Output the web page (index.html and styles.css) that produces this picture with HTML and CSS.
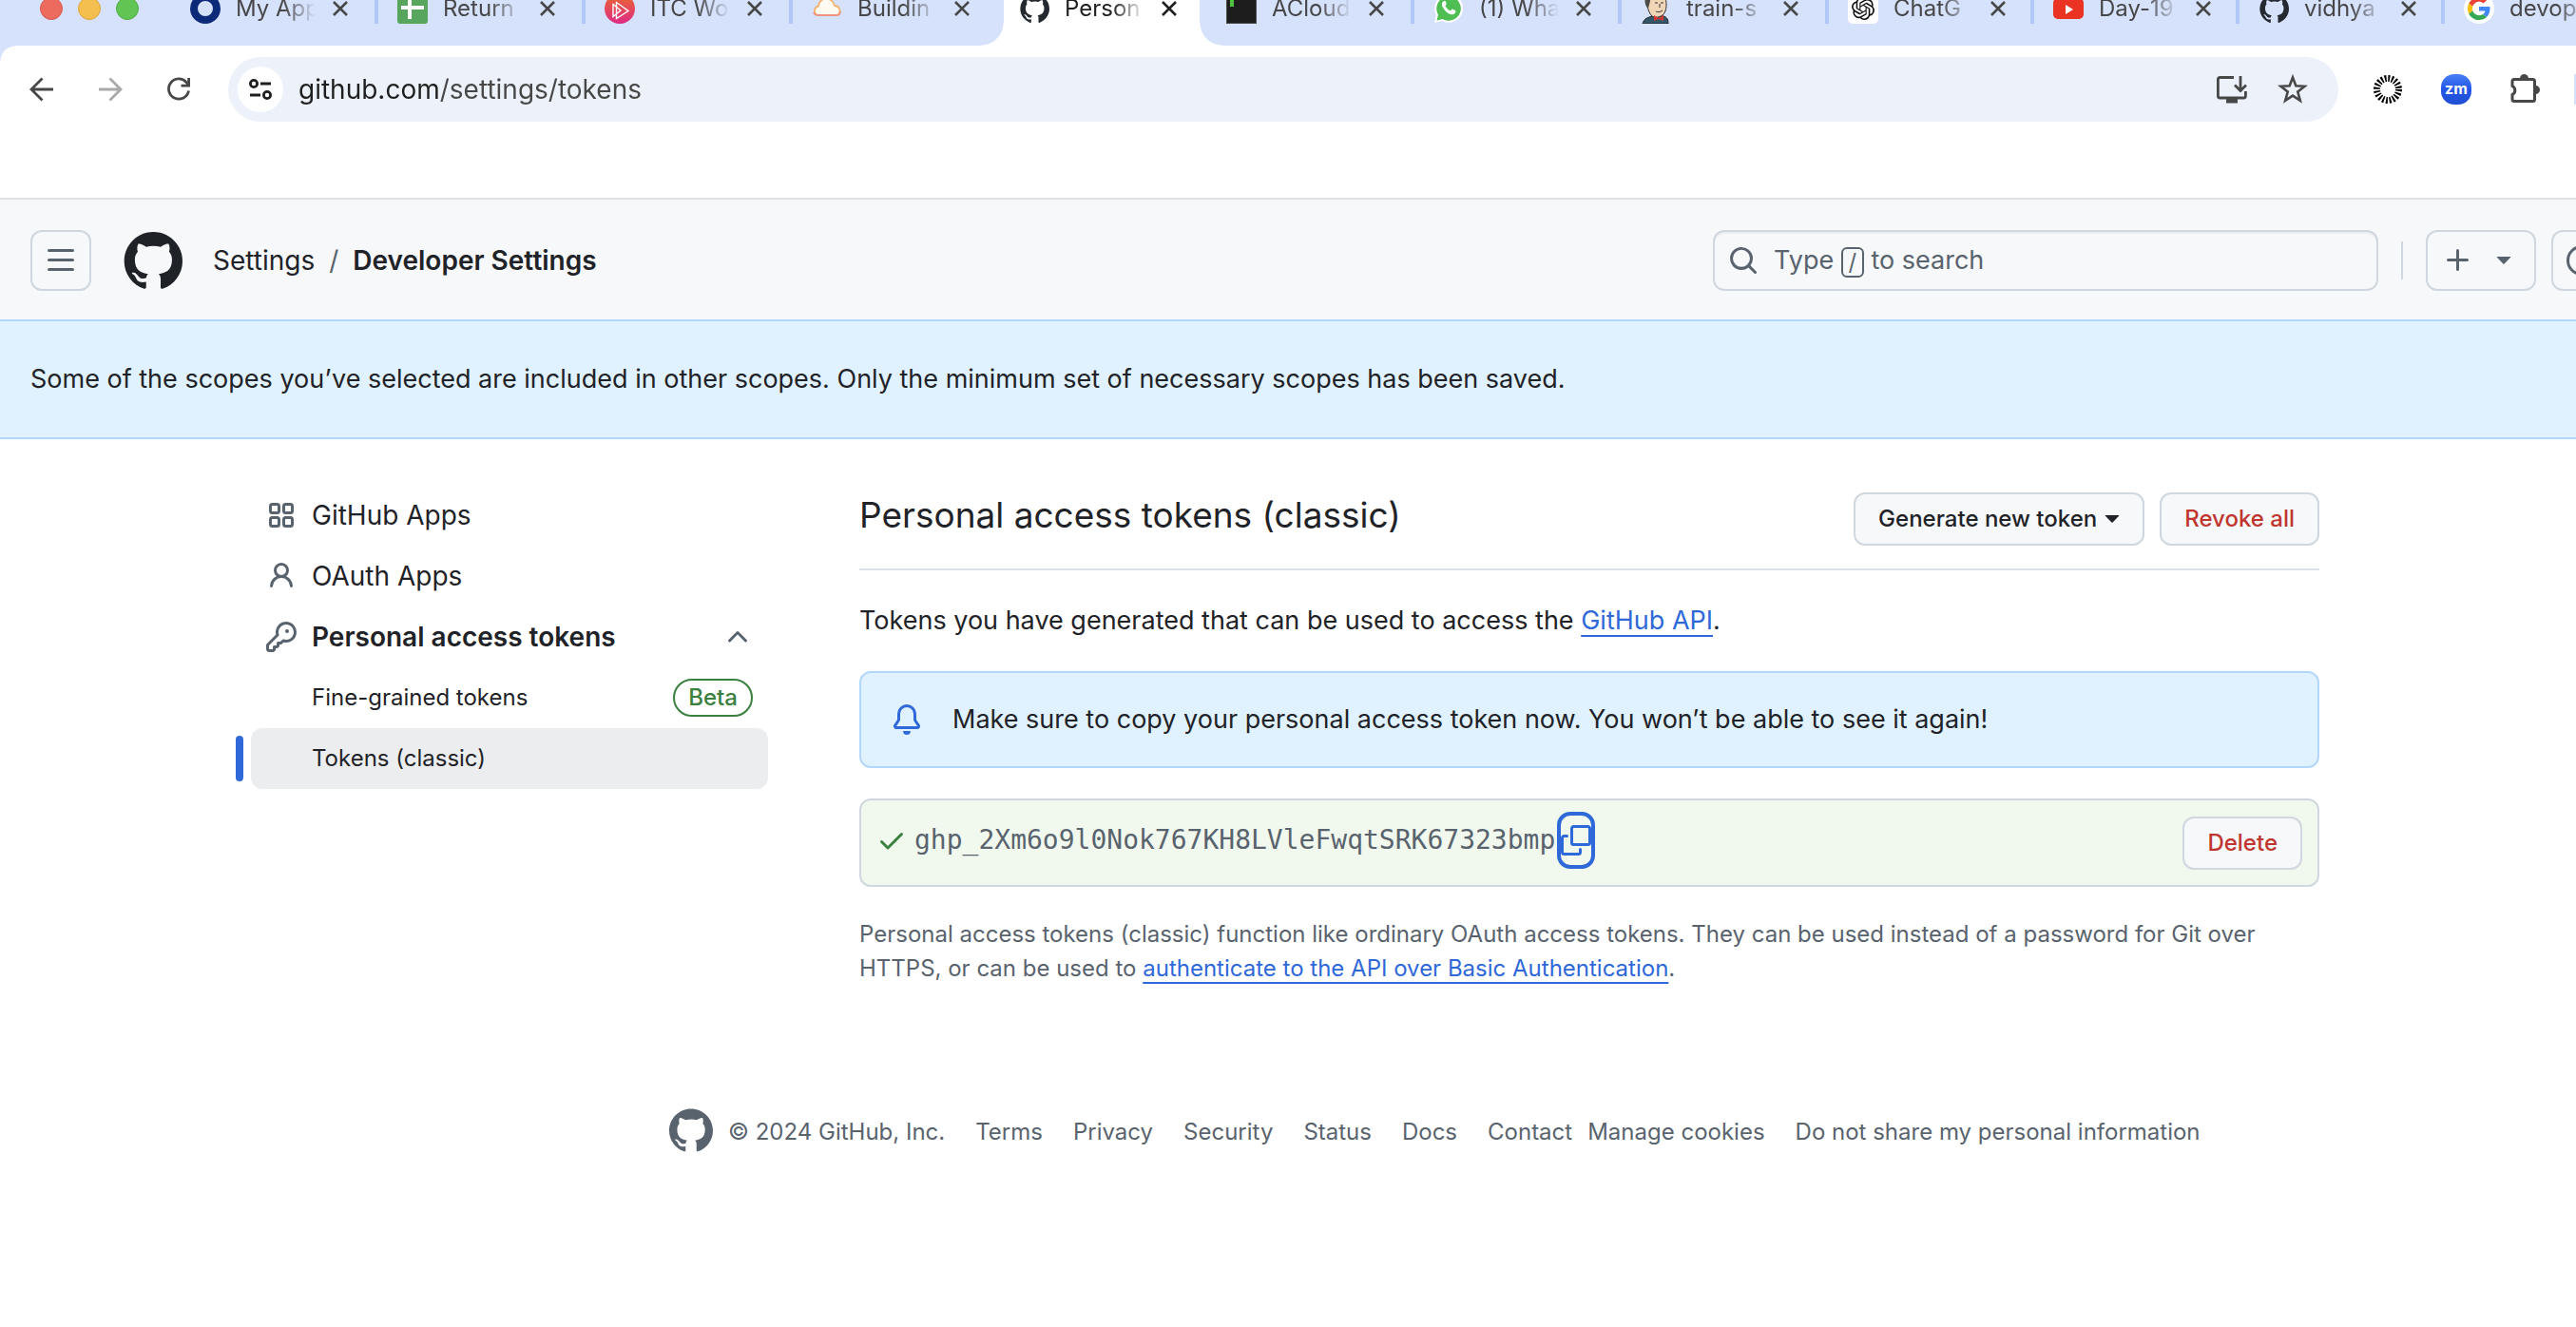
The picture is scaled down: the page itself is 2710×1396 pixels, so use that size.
FILE: index.html
```html
<!DOCTYPE html>
<html lang="en">
<head>
<meta charset="utf-8">
<title>Personal Access Tokens (Classic)</title>
<link rel="stylesheet" href="styles.css">
</head>
<body>
<svg class="sprite" aria-hidden="true">
  <symbol id="mark" viewBox="0 0 24 24"><path d="M12.5.75C6.146.75 1 5.896 1 12.25c0 5.089 3.292 9.387 7.863 10.91.575.101.79-.244.79-.546 0-.273-.014-1.178-.014-2.142-2.889.532-3.636-.704-3.866-1.35-.13-.331-.69-1.352-1.18-1.625-.402-.216-.977-.748-.014-.762.906-.014 1.553.834 1.769 1.179 1.035 1.74 2.688 1.25 3.349.948.1-.747.402-1.25.733-1.538-2.559-.287-5.232-1.279-5.232-5.678 0-1.25.445-2.285 1.178-3.09-.115-.288-.517-1.467.115-3.048 0 0 .963-.302 3.163 1.179.92-.259 1.897-.388 2.875-.388.977 0 1.955.13 2.875.388 2.2-1.495 3.162-1.179 3.162-1.179.633 1.581.23 2.76.115 3.048.733.805 1.179 1.825 1.179 3.09 0 4.413-2.688 5.39-5.247 5.678.417.36.776 1.05.776 2.128 0 1.538-.014 2.774-.014 3.162 0 .302.216.662.79.547C20.709 21.637 24 17.324 24 12.25 24 5.896 18.854.75 12.5.75Z"/></symbol>
  <symbol id="close" viewBox="0 0 16 16"><path d="M1 1l14 14M15 1L1 15" fill="none" stroke="currentColor" stroke-width="2.6"/></symbol>
  <symbol id="triangle" viewBox="4 6 8 6"><path d="m4.427 7.427 3.396 3.396a.25.25 0 0 0 .354 0l3.396-3.396A.25.25 0 0 0 11.396 7H4.604a.25.25 0 0 0-.177.427Z"/></symbol>
</svg>

<div class="tabstrip">
  <div class="lights"><i class="light red"></i><i class="light yellow"></i><i class="light green"></i></div>
  <ul class="tabs">
    <li class="tab"><button class="tab-label"><svg class="favicon" viewBox="0 0 32 32"><circle cx="16" cy="16" r="12" fill="none" stroke="#0d2a78" stroke-width="8"/></svg><span class="tab-title">My App</span></button><button class="tab-close" aria-label="Close"><svg><use href="#close"/></svg></button></li>
    <li class="tab"><button class="tab-label"><svg class="favicon" viewBox="0 0 32 32"><rect width="32" height="32" rx="3" fill="#58a55d"/><path d="M4 15h24M13 6v21" stroke="#fff" stroke-width="4"/></svg><span class="tab-title">Return</span></button><button class="tab-close" aria-label="Close"><svg><use href="#close"/></svg></button></li>
    <li class="tab"><button class="tab-label"><svg class="favicon" viewBox="0 0 32 32"><defs><linearGradient id="ps" x1="0" y1="0" x2="0" y2="1"><stop offset="0" stop-color="#ea6a2c"/><stop offset="1" stop-color="#de2a86"/></linearGradient></defs><circle cx="16" cy="16" r="16" fill="url(#ps)"/><path d="M9 11.5v13l8-6.500-8-6.500ZM12.500 9.500v17l12.500-8Z" fill="none" stroke="#fff" stroke-width="1.4"/></svg><span class="tab-title">ITC Wo</span></button><button class="tab-close" aria-label="Close"><svg><use href="#close"/></svg></button></li>
    <li class="tab tab-before"><button class="tab-label"><svg class="favicon" viewBox="0 0 32 32"><path d="M6 23a5 5 0 0 1 1-9.500C8 7 13 4 18 6c4 1 5 4 6 7 5 0 8 7 3 10Z" fill="#fffaf2" stroke="#f6b26b" stroke-width="1.8"/><path d="M2 20c1 3 3 3 5 3h19c2 0 4-1 4-4" fill="none" stroke="#f0937f" stroke-width="1.8"/></svg><span class="tab-title">Buildin</span></button><button class="tab-close" aria-label="Close"><svg><use href="#close"/></svg></button></li>
    <li class="tab tab-active"><button class="tab-label"><svg class="favicon"><use href="#mark"/></svg><span class="tab-title">Person</span></button><button class="tab-close" aria-label="Close"><svg><use href="#close"/></svg></button></li>
    <li class="tab"><button class="tab-label"><svg class="favicon" viewBox="0 0 32 32"><rect width="32" height="32" fill="#4a4a4a"/><rect x="1" y="1" width="30" height="30" fill="#1d1d1d"/><rect x="4" y="6" width="4" height="8" fill="#4fc23f"/></svg><span class="tab-title">ACloud</span></button><button class="tab-close" aria-label="Close"><svg><use href="#close"/></svg></button></li>
    <li class="tab"><button class="tab-label"><svg class="favicon" viewBox="0 0 32 32"><path d="M1 31l2-8A15 15 0 1 1 9 29Z" fill="#fff"/><path d="M3.5 28.5l1.5-6A12.8 12.8 0 1 1 9.5 27Z" fill="#4fbf54"/><path d="M11 8c-2 1-3 4-1 7 3 5 7 8 11 7 2-.5 3-3 2-4l-3-1.5c-1-.3-1.5 2-2.5 1.8-2-.8-4-2.8-5-5 0-.8 1.500-1.500 1.200-2.500L12.500 8Z" fill="#fff"/></svg><span class="tab-title">(1) Wha</span></button><button class="tab-close" aria-label="Close"><svg><use href="#close"/></svg></button></li>
    <li class="tab"><button class="tab-label"><svg class="favicon" viewBox="0 0 32 32"><path d="M2 32c1-4 3-6 10-8h12c4 1 5 4 5 8Z" fill="#33566b" stroke="#222"/><path d="M7 2h18c3 7 3 17-2 21-5 3-9 3-12 0-3-4-6-13-4-21Z" fill="#f0d6b7" stroke="#333"/><path d="M5 0h15c-7 3-10 4-10 8L8 16c-4-3-4-9-3-16Z" fill="#4a4a48"/><path d="M14 23l5 3 5-3v6l-5-2-5 2Z" fill="#d33833"/><path d="M15 10h3m3 0h3m-4 1v4m-4 4c2 1 4 1 7-1" stroke="#333" fill="none"/></svg><span class="tab-title">train-s</span></button><button class="tab-close" aria-label="Close"><svg><use href="#close"/></svg></button></li>
    <li class="tab tab-narrow"><button class="tab-label"><svg class="favicon" viewBox="-4 -4 32 32"><rect x="-4" y="-4" width="32" height="32" rx="5" fill="#fff"/><path fill="#111" d="M22.2819 9.8211a5.9847 5.9847 0 0 0-.5157-4.9108 6.0462 6.0462 0 0 0-6.5098-2.9A6.0651 6.0651 0 0 0 4.9807 4.1818a5.9847 5.9847 0 0 0-3.9977 2.9 6.0462 6.0462 0 0 0 .7427 7.0966 5.98 5.98 0 0 0 .511 4.9107 6.051 6.051 0 0 0 6.5146 2.9001A5.9847 5.9847 0 0 0 13.2599 24a6.0557 6.0557 0 0 0 5.7718-4.2058 5.9894 5.9894 0 0 0 3.9977-2.9001 6.0557 6.0557 0 0 0-.7475-7.0729zm-9.022 12.6081a4.4755 4.4755 0 0 1-2.8764-1.0408l.1419-.0804 4.7783-2.7582a.7948.7948 0 0 0 .3927-.6813v-6.7369l2.02 1.1686a.071.071 0 0 1 .038.052v5.5826a4.504 4.504 0 0 1-4.4945 4.4944zm-9.6607-4.1254a4.4708 4.4708 0 0 1-.5346-3.0137l.142.0852 4.783 2.7582a.7712.7712 0 0 0 .7806 0l5.8428-3.3685v2.3324a.0804.0804 0 0 1-.0332.0615L9.74 19.9502a4.4992 4.4992 0 0 1-6.1408-1.6464zM2.3408 7.8956a4.485 4.485 0 0 1 2.3655-1.9728V11.6a.7664.7664 0 0 0 .3879.6765l5.8144 3.3543-2.0201 1.1685a.0757.0757 0 0 1-.071 0l-4.8303-2.7865A4.504 4.504 0 0 1 2.3408 7.872zm16.5963 3.8558L13.1038 8.364 15.1192 7.2a.0757.0757 0 0 1 .071 0l4.8303 2.7913a4.4944 4.4944 0 0 1-.6765 8.1042v-5.6772a.79.79 0 0 0-.407-.667zm2.0107-3.0231l-.142-.0852-4.7735-2.7818a.7759.7759 0 0 0-.7854 0L9.409 9.2297V6.8974a.0662.0662 0 0 1 .0284-.0615l4.8303-2.7866a4.4992 4.4992 0 0 1 6.6802 4.66zM8.3065 12.863l-2.02-1.1638a.0804.0804 0 0 1-.038-.0567V6.0742a4.4992 4.4992 0 0 1 7.3757-3.4537l-.142.0805L8.704 5.459a.7948.7948 0 0 0-.3927.6813zm1.0976-2.3654l2.602-1.4998 2.6069 1.4998v2.9994l-2.5974 1.4997-2.6067-1.4997Z"/></svg><span class="tab-title">ChatG</span></button><button class="tab-close" aria-label="Close"><svg><use href="#close"/></svg></button></li>
    <li class="tab tab-narrow"><button class="tab-label"><svg class="favicon" viewBox="0 0 32 32"><rect y="5" width="32" height="22" rx="5" fill="#ea3323"/><path d="M13 12l8 5-8 5Z" fill="#fff"/></svg><span class="tab-title">Day-19</span></button><button class="tab-close" aria-label="Close"><svg><use href="#close"/></svg></button></li>
    <li class="tab tab-narrow"><button class="tab-label"><svg class="favicon"><use href="#mark"/></svg><span class="tab-title">vidhya</span></button><button class="tab-close" aria-label="Close"><svg><use href="#close"/></svg></button></li>
    <li class="tab tab-narrow"><button class="tab-label"><svg class="favicon" viewBox="0 0 32 32"><circle cx="16" cy="16" r="16" fill="#fff"/><g transform="translate(4 4) scale(.5)"><path fill="#ea4335" d="M24 9.5c3.54 0 6.71 1.22 9.21 3.6l6.85-6.85C35.9 2.38 30.47 0 24 0 14.62 0 6.51 5.38 2.56 13.22l7.98 6.19C12.43 13.72 17.74 9.5 24 9.5z"/><path fill="#4285f4" d="M46.98 24.55c0-1.57-.15-3.09-.38-4.55H24v9.02h12.94c-.58 2.96-2.26 5.48-4.78 7.18l7.73 6c4.51-4.18 7.09-10.36 7.09-17.65z"/><path fill="#fbbc05" d="M10.53 28.59c-.48-1.45-.76-2.99-.76-4.59s.27-3.14.76-4.59l-7.98-6.19C.92 16.46 0 20.12 0 24c0 3.88.92 7.54 2.56 10.78l7.97-6.19z"/><path fill="#34a853" d="M24 48c6.48 0 11.93-2.13 15.89-5.81l-7.73-6c-2.15 1.45-4.92 2.3-8.16 2.3-6.26 0-11.57-4.22-13.47-9.91l-7.98 6.19C6.51 42.62 14.62 48 24 48z"/></g></svg><span class="tab-title">devop</span></button></li>
  </ul>
</div>

<div class="toolbar">
  <button class="tool" aria-label="Back"><svg viewBox="0 0 32 32"><path d="M28 16H6M16.5 4.5L5 16l11.5 11.5" fill="none" stroke="#474747" stroke-width="2.8"/></svg></button>
  <button class="tool" aria-label="Forward"><svg viewBox="0 0 32 32"><path d="M4 16h22M15.5 4.5L27 16 15.5 27.5" fill="none" stroke="#a9a9a9" stroke-width="2.8"/></svg></button>
  <button class="tool" aria-label="Reload"><svg viewBox="0 0 32 32"><path d="M26.5 17.5A10.6 10.6 0 1 1 24 8.5l2.500 3" fill="none" stroke="#474747" stroke-width="2.8"/><path d="M28 4v9.500H18.500v-2.800h6.700V4Z" fill="#474747"/></svg></button>
  <div class="omnibox">
    <button class="site-info" aria-label="View site information"><svg viewBox="0 0 28 28" fill="none" stroke="#1f1f1f" stroke-width="2.8"><circle cx="7" cy="8" r="3.6"/><path d="M14 8h11M3 20h11"/><circle cx="21" cy="20" r="3.6"/></svg></button>
    <input class="url" type="text" aria-label="Address" value="github.com/settings/tokens">
    <button class="tool" aria-label="Install page"><svg viewBox="0 0 32 32" fill="none" stroke="#474747" stroke-width="2.8"><path d="M18 3.5H3.5Q1.4 3.5 1.4 5.5V23q0 2 2 2h25q2 0 2-2v-5M25 2v15M19 11.5l6 6 6-6"/><path d="M10 28h12" stroke-width="5"/></svg></button>
    <button class="tool" aria-label="Bookmark"><svg viewBox="0 0 32 32"><path d="M16 3.5l3.3 8.8 9.2.5-7.2 5.8 2.5 9.2L16 22.6l-7.8 5.200 2.500-9.200-7.200-5.800 9.200-.500Z" fill="none" stroke="#474747" stroke-width="2.6"/></svg></button>
  </div>
  <button class="tool" aria-label="Extension"><svg viewBox="0 0 32 32"><circle cx="16" cy="16" r="11.5" fill="none" stroke="#000" stroke-width="7" stroke-dasharray="1.9 1.711"/></svg></button>
  <button class="tool" aria-label="Zoom"><span class="zm">zm</span></button>
  <button class="tool" aria-label="Extensions"><svg viewBox="0 0 32 32"><path d="M5 5.500h19.500q2 0 2 2V26.500q0 2-2 2H5q-2 0-2-2V21.500a5 5 0 0 0 0-9V7.500q0-2 2-2Z" fill="none" stroke="#474747" stroke-width="3"/><path d="M11 4.500a4.500 4.500 0 0 1 9 0ZM27.500 12a4.500 4.500 0 0 1 0 9Z" fill="#474747"/></svg></button>
  <span class="tool-divider"></span>
</div>

<header class="app-header">
  <button class="square-button" aria-label="Open menu"><svg class="icon" viewBox="0 0 16 16"><path d="M1 2.75A.75.75 0 0 1 1.75 2h12.5a.75.75 0 0 1 0 1.5H1.75A.75.75 0 0 1 1 2.75Zm0 5A.75.75 0 0 1 1.75 7h12.5a.75.75 0 0 1 0 1.5H1.75A.75.75 0 0 1 1 7.75ZM1.75 12h12.5a.75.75 0 0 1 0 1.5H1.75a.75.75 0 0 1 0-1.5Z"/></svg></button>
  <a class="logo" href="#" aria-label="Homepage"><svg><use href="#mark"/></svg></a>
  <nav class="crumbs" aria-label="Breadcrumb"><a href="#">Settings</a><span class="slash">/</span><a class="current" href="#">Developer Settings</a></nav>
  <button class="search"><svg class="icon" viewBox="0 0 16 16"><path d="M10.68 11.74a6 6 0 0 1-7.922-8.982 6 6 0 0 1 8.982 7.922l3.04 3.04a.749.749 0 0 1-.326 1.275.749.749 0 0 1-.734-.215ZM11.5 7a4.499 4.499 0 1 0-8.997 0A4.499 4.499 0 0 0 11.5 7Z"/></svg><span class="search-text">Type <kbd>/</kbd> to search</span></button>
  <span class="header-divider"></span>
  <button class="create" aria-label="Create new"><svg class="icon" viewBox="0 0 16 16"><path d="M7.75 2a.75.75 0 0 1 .75.75V7h4.25a.75.75 0 0 1 0 1.5H8.5v4.25a.75.75 0 0 1-1.5 0V8.5H2.75a.75.75 0 0 1 0-1.5H7V2.75A.75.75 0 0 1 7.75 2Z"/></svg><svg class="caret"><use href="#triangle"/></svg></button>
  <button class="square-button issues" aria-label="Issues"><svg class="icon" viewBox="0 0 16 16"><circle cx="8" cy="8" r="7.25" fill="none" stroke="currentColor" stroke-width="1.5"/><circle cx="8" cy="8" r="1.5"/></svg></button>
</header>

<div class="flash-full">Some of the scopes you’ve selected are included in other scopes. Only the minimum set of necessary scopes has been saved.</div>

<div class="layout">
  <nav class="sidebar" aria-label="Developer settings">
    <a class="nav-item" href="#"><svg class="icon" viewBox="0 0 16 16" fill="none" stroke="currentColor" stroke-width="1.5"><rect x="2.25" y="2.25" width="4.5" height="4.5" rx="1"/><rect x="9.25" y="2.25" width="4.5" height="4.5" rx="1"/><rect x="2.25" y="9.25" width="4.5" height="4.5" rx="1"/><rect x="9.25" y="9.25" width="4.5" height="4.5" rx="1"/></svg>GitHub Apps</a>
    <a class="nav-item" href="#"><svg class="icon" viewBox="0 0 16 16"><path d="M10.561 8.073a6.005 6.005 0 0 1 3.432 5.142.75.75 0 1 1-1.498.07 4.5 4.5 0 0 0-8.99 0 .75.75 0 0 1-1.498-.07 6.004 6.004 0 0 1 3.431-5.142 3.999 3.999 0 1 1 5.123 0ZM10.5 5a2.5 2.5 0 1 0-5 0 2.5 2.5 0 0 0 5 0Z"/></svg>OAuth Apps</a>
    <button class="nav-item nav-group" aria-expanded="true"><svg class="icon" viewBox="0 0 16 16"><path d="M10.5 0a5.499 5.499 0 1 1-1.288 10.848l-.932.932a.749.749 0 0 1-.53.22H7v.75a.749.749 0 0 1-.22.53l-.5.5a.749.749 0 0 1-.53.22H5v.75a.749.749 0 0 1-.22.53l-.5.5a.749.749 0 0 1-.53.22h-2A1.75 1.75 0 0 1 0 14.25v-2c0-.199.079-.389.22-.53l4.932-4.932A5.5 5.5 0 0 1 10.5 0Zm-4 5.5c-.001.431.069.86.205 1.269a.75.75 0 0 1-.181.768L1.5 12.56v1.69c0 .138.112.25.25.25h1.69l.06-.06v-1.19a.75.75 0 0 1 .75-.75h1.19l.06-.06v-1.19a.75.75 0 0 1 .75-.75h1.19l1.023-1.025a.75.75 0 0 1 .768-.18A4 4 0 1 0 6.5 5.5ZM11 6a1 1 0 1 1 0-2 1 1 0 0 1 0 2Z"/></svg>Personal access tokens<svg class="icon trailing" viewBox="0 0 16 16"><path d="M3.22 10.53a.749.749 0 0 1 0-1.06l4.25-4.25a.749.749 0 0 1 1.06 0l4.25 4.25a.749.749 0 1 1-1.06 1.06L8 6.811 4.28 10.53a.749.749 0 0 1-1.06 0Z"/></svg></button>
    <a class="nav-item nav-sub" href="#">Fine-grained tokens<span class="beta">Beta</span></a>
    <a class="nav-item nav-sub selected" href="#" aria-current="page">Tokens (classic)</a>
  </nav>

  <main class="content">
    <div class="subhead">
      <h1>Personal access tokens (classic)</h1>
      <div class="actions">
        <button class="btn">Generate new token<svg class="caret"><use href="#triangle"/></svg></button>
        <button class="btn danger">Revoke all</button>
      </div>
    </div>
    <p class="intro">Tokens you have generated that can be used to access the <a href="#">GitHub API</a>.</p>
    <div class="flash"><svg class="icon" viewBox="0 0 16 16"><path d="M8 16a2 2 0 0 0 1.985-1.75c.017-.137-.097-.25-.235-.25h-3.5c-.138 0-.252.113-.235.25A2 2 0 0 0 8 16ZM3 5a5 5 0 0 1 10 0v2.947c0 .05.015.098.042.139l1.703 2.555A1.519 1.519 0 0 1 13.482 13H2.518a1.516 1.516 0 0 1-1.263-2.36l1.703-2.554A.255.255 0 0 0 3 7.947Zm5-3.5A3.5 3.5 0 0 0 4.5 5v2.947c0 .346-.102.683-.294.97l-1.703 2.556a.017.017 0 0 0-.003.01l.001.006c0 .002.002.004.004.006l.006.004.007.001h10.964l.007-.001.006-.004.004-.006.001-.007a.017.017 0 0 0-.003-.01l-1.703-2.554a1.745 1.745 0 0 1-.294-.97V5A3.5 3.5 0 0 0 8 1.5Z"/></svg>Make sure to copy your personal access token now. You won’t be able to see it again!</div>
    <div class="token-row">
      <div class="token"><svg class="icon check" viewBox="0 0 16 16"><path d="M13.78 4.22a.75.75 0 0 1 0 1.06l-7.25 7.25a.75.75 0 0 1-1.06 0L2.22 9.28a.751.751 0 0 1 .018-1.042.751.751 0 0 1 1.042-.018L6 10.94l6.72-6.72a.75.75 0 0 1 1.06 0Z"/></svg><code>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</code><button class="copy" aria-label="Copy token"><svg class="icon" viewBox="0 0 16 16"><path d="M0 6.75C0 5.784.784 5 1.75 5h1.5a.75.75 0 0 1 0 1.5h-1.5a.25.25 0 0 0-.25.25v7.5c0 .138.112.25.25.25h7.5a.25.25 0 0 0 .25-.25v-1.5a.75.75 0 0 1 1.5 0v1.5A1.75 1.75 0 0 1 9.25 16h-7.5A1.75 1.75 0 0 1 0 14.25Z"/><path d="M5 1.75C5 .784 5.784 0 6.75 0h7.5C15.216 0 16 .784 16 1.75v7.5A1.75 1.75 0 0 1 14.25 11h-7.5A1.75 1.75 0 0 1 5 9.25Zm1.75-.25a.25.25 0 0 0-.25.25v7.5c0 .138.112.25.25.25h7.5a.25.25 0 0 0 .25-.25v-7.5a.25.25 0 0 0-.25-.25Z"/></svg></button></div>
      <button class="btn danger">Delete</button>
    </div>
    <p class="note">Personal access tokens (classic) function like ordinary OAuth access tokens. They can be used instead of a password for Git over HTTPS, or can be used to <a href="#">authenticate to the API over Basic Authentication</a>.</p>
  </main>
</div>

<footer class="footer">
  <svg class="footer-mark"><use href="#mark"/></svg>
  <span class="copyright">© 2024 GitHub, Inc.</span>
  <ul class="footer-links">
    <li><a href="#">Terms</a></li>
    <li><a href="#">Privacy</a></li>
    <li><a href="#">Security</a></li>
    <li><a href="#">Status</a></li>
    <li><a href="#">Docs</a></li>
    <li class="tight"><a href="#">Contact</a></li>
    <li><button>Manage cookies</button></li>
    <li><button>Do not share my personal information</button></li>
  </ul>
</footer>
</body>
</html>
```
FILE: styles.css
```css
*, *::before, *::after { box-sizing: border-box; }

body {
  margin: 0;
  overflow-x: hidden;
  background: #fff;
  color: #1f2328;
  font-family: Inter, "Liberation Sans", sans-serif;
  font-size: 28px;
  line-height: 42px;
}

button, input {
  margin: 0;
  padding: 0;
  border: 0;
  background: none;
  color: inherit;
  font: inherit;
}

h1, p, ul { margin: 0; padding: 0; }
ul { list-style: none; }
a { color: inherit; text-decoration: none; }
svg { display: block; flex: none; }

.sprite { position: absolute; width: 0; height: 0; }
.icon { width: 32px; height: 32px; fill: currentColor; }
.icon[fill="none"] { fill: none; }
.caret { width: 16px; height: 12px; fill: currentColor; }

/* Browser tab strip */
.tabstrip {
  display: flex;
  height: 48px;
  overflow: hidden;
  background: #d6e1fc;
}

.lights {
  display: flex;
  flex: none;
  gap: 16px;
  width: 180px;
  padding-left: 42px;
  margin-top: -3px;
}

.light { width: 24px; height: 24px; border: 1px solid; border-radius: 50%; }
.red { background: #ed6a5e; border-color: #d9584d; }
.yellow { background: #f5bf4f; border-color: #dca63a; }
.green { background: #61c554; border-color: #50ac43; }

.tabs { display: flex; margin-top: -8px; }

.tab {
  position: relative;
  display: flex;
  flex: none;
  align-items: center;
  gap: 18px;
  width: 218px;
  height: 33px;
  padding-left: 20px;
  border-right: 4px solid #afc8f8;
  color: #474747;
  font-size: 24px;
  line-height: 32px;
}

.tab-narrow { width: 216px; }
.tab-before, .tab-active { border-color: transparent; }
.tab-label { display: flex; align-items: center; gap: 16px; isolation: isolate; }
.favicon { width: 32px; height: 32px; fill: #24292f; }

.tab-title {
  width: 84px;
  overflow: hidden;
  text-align: left;
  white-space: nowrap;
  mask-image: linear-gradient(to right, #000 50px, transparent 84px);
}

.tab-close svg { width: 16px; height: 16px; }
.tab-active { z-index: 1; color: #1f1f1f; }
.tab-active > * { position: relative; z-index: 1; }

.tab-active::before {
  content: "";
  position: absolute;
  inset: 0 4px auto 4px;
  height: 56px;
  background: #fff;
}

.tab-active::after {
  content: "";
  position: absolute;
  top: 32px;
  left: -20px;
  right: -20px;
  height: 24px;
  background:
    radial-gradient(circle at 0 0, transparent 23px, #fff 24px) left / 24px 24px no-repeat,
    radial-gradient(circle at 100% 0, transparent 23px, #fff 24px) right / 24px 24px no-repeat;
}

/* Browser toolbar */
.toolbar {
  display: flex;
  align-items: flex-start;
  gap: 40px;
  height: 162px;
  padding: 12px 0 0 28px;
  border-bottom: 2px solid #dfe1e0;
  background: radial-gradient(circle at 16px 16px, #fff 15px, #d6e1fc 16px) left top / 16px 16px no-repeat #fff;
}

.tool {
  display: flex;
  flex: none;
  align-items: center;
  justify-content: center;
  width: 32px;
  height: 68px;
}

.tool svg { width: 32px; height: 32px; }

.omnibox {
  display: flex;
  flex: 1;
  align-items: center;
  gap: 32px;
  height: 68px;
  margin: 0 -4px;
  padding: 0 32px 0 10px;
  border-radius: 34px;
  background: #edf2fa;
}

.site-info {
  display: flex;
  align-items: center;
  justify-content: center;
  width: 48px;
  height: 48px;
  margin-right: -16px;
  border-radius: 50%;
  background: #fff;
}

.site-info svg { width: 28px; height: 28px; }

/* The host name is darker than the path that follows it. */
.url {
  flex: 1;
  min-width: 0;
  height: 42px;
  outline: 0;
  background: linear-gradient(to right, #1f1f1f 148px, #474747 148px);
  background-clip: text;
  -webkit-text-fill-color: transparent;
}

.zm {
  width: 32px;
  height: 32px;
  border-radius: 14px;
  background: linear-gradient(#4a80f5, #2456e8 50%, #1f4fd0);
  color: #fff;
  font-size: 16px;
  font-weight: 700;
  line-height: 30px;
  text-align: center;
}

.tool-divider { width: 2px; height: 32px; margin: 18px 0 0 -4px; background: #d3e3fd; }

/* Application header */
.app-header {
  display: flex;
  align-items: center;
  padding: 32px 0 30px 32px;
  overflow: hidden;
  background: #f6f8fa;
}

.square-button, .create, .search {
  display: flex;
  flex: none;
  align-items: center;
  height: 64px;
  border: 2px solid #d0d7de;
  border-radius: 12px;
  color: #59636e;
}

.square-button { justify-content: center; width: 64px; }
.logo { margin: 0 32px; fill: #1f2328; }
.logo svg { width: 64px; height: 64px; }
.crumbs { display: flex; gap: 15px; margin-right: auto; }
.slash { color: #59636e; }
.current { font-weight: 600; }

.search {
  gap: 16px;
  width: 700px;
  padding: 0 14px;
  box-shadow: inset 0 2px 0 #eceff2;
  font-size: 27px;
}

.search kbd {
  display: inline-block;
  width: 24px;
  height: 32px;
  border: 2px solid #59636e;
  border-radius: 6px;
  font: inherit;
  font-size: 24px;
  line-height: 28px;
  text-align: center;
  vertical-align: middle;
}

.header-divider { width: 2px; height: 40px; margin: 0 24px; background: #d0d7de; }
.create { gap: 24px; width: 116px; padding-left: 16px; margin-right: 16px; }
.issues { margin-right: -38px; }

/* Notices */
.flash-full, .flash, .intro { font-size: 27px; }

.flash-full {
  padding: 40px 32px;
  border: solid #b2d7fd;
  border-width: 2px 0;
  background: #e0f2ff;
}

.flash {
  display: flex;
  align-items: center;
  gap: 32px;
  padding: 28px 32px;
  border: 2px solid #b2d7fd;
  border-radius: 12px;
  background: #e0f2ff;
}

.flash .icon { color: #2f68d8; }

/* Page */
.layout {
  display: flex;
  gap: 96px;
  align-items: flex-start;
  padding: 48px 270px 0 264px;
}

.sidebar { flex: none; width: 544px; }

.nav-item {
  position: relative;
  display: flex;
  align-items: center;
  gap: 16px;
  width: 100%;
  height: 64px;
  padding: 0 16px;
  border-radius: 12px;
}

.nav-item .icon { color: #59636e; }
.nav-group { font-weight: 600; }
.nav-item .trailing { margin-left: auto; }
.nav-sub { padding-left: 64px; font-size: 24px; }
.selected { background: #ecedef; }

.selected::before {
  content: "";
  position: absolute;
  left: -16px;
  width: 8px;
  height: 48px;
  border-radius: 4px;
  background: #2f68d8;
}

.beta {
  height: 40px;
  margin-left: auto;
  padding: 0 14px;
  border: 2px solid #3a803e;
  border-radius: 20px;
  color: #3a803e;
  font-weight: 500;
  line-height: 36px;
}

.content { flex: 1; min-width: 0; }

.subhead {
  display: flex;
  justify-content: space-between;
  border-bottom: 2px solid #dbe1e7;
}

h1 { font-size: 37px; font-weight: 400; line-height: 64px; }
.actions { display: flex; gap: 16px; padding: 8px 0 24px; }

.btn {
  display: flex;
  align-items: center;
  gap: 8px;
  height: 56px;
  padding: 0 24px;
  border: 2px solid #d0d7de;
  border-radius: 12px;
  background: #f6f8fa;
  font-size: 24px;
  font-weight: 500;
  white-space: nowrap;
}

.danger { color: #c0362f; }

.content p a {
  color: #2f68d8;
  text-decoration: underline;
  text-decoration-thickness: 2px;
  text-underline-offset: 6px;
}

.intro { margin: 32px 0; }

.token-row {
  display: flex;
  align-items: flex-start;
  justify-content: space-between;
  margin: 32px 0;
  padding: 12px 16px 16px;
  border: 2px solid #d0d7de;
  border-radius: 12px;
  background: #f1f9ee;
}

.token-row .btn { margin-top: 5px; }
.token { display: flex; align-items: center; color: #59636e; }
.check { margin-right: 8px; color: #3a803e; }
code { font-family: "DejaVu Sans Mono", monospace; font-size: 28px; }

.copy {
  display: flex;
  align-items: center;
  justify-content: center;
  width: 40px;
  height: 60px;
  margin-left: 2px;
  border: 4px solid #2f68d8;
  border-radius: 14px;
  color: #2f68d8;
}

.note { color: #59636e; font-size: 24px; line-height: 36px; }

.footer {
  display: flex;
  gap: 16px;
  padding: 128px 0 120px 702px;
  color: #59636e;
  font-size: 24px;
  line-height: 52px;
  white-space: nowrap;
}

.footer-mark { width: 48px; height: 48px; fill: #59636e; }
.footer-links { display: flex; gap: 32px; margin-left: 16px; }
.tight { margin-right: -16px; }
```
